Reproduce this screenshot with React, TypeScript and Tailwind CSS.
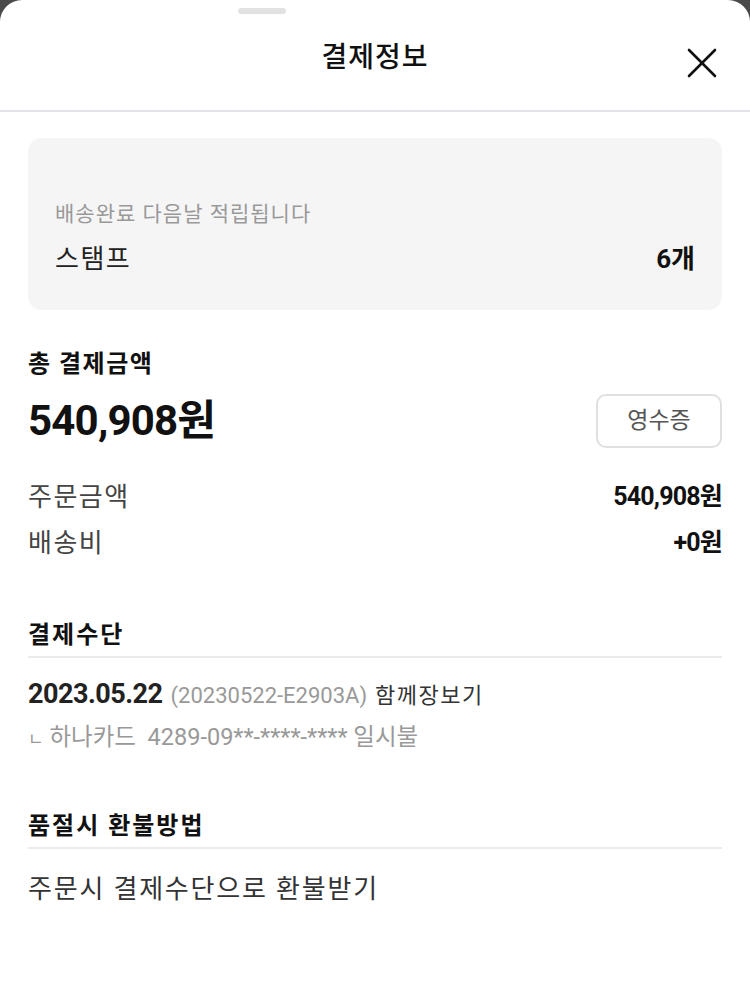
const font = { fontFamily: 'Roboto, "Noto Sans CJK KR", sans-serif' };

const Row = ({ label, value }: { label: string; value: string }) => (
  <div className="flex items-center justify-between">
    <span className="text-[26px] leading-[32px] tracking-[1.5px] text-[#444]">{label}</span>
    <span className="text-[25px] leading-[32px] font-bold tracking-[-0.8px] text-[#111]">{value}</span>
  </div>
);

const SectionTitle = ({ children }: { children: string }) => (
  <div className="border-b-2 border-[#ebebeb] pb-[7px]">
    <h3 className="text-[24px] leading-[28px] font-bold tracking-[2px] text-[#111]">{children}</h3>
  </div>
);

const CloseIcon = () => (
  <svg width="30" height="30" viewBox="0 0 30 30" fill="none" stroke="currentColor" strokeWidth="2.6" strokeLinecap="round">
    <path d="M2 2 L28 28" />
    <path d="M28 2 L2 28" />
  </svg>
);

export default function App() {
  return (
    <div className="min-h-[986px] w-[750px] bg-[#4a4a4a]" style={font}>
      <div className="min-h-[986px] rounded-t-[22px] bg-white">
        <header className="relative flex h-[112px] items-center justify-center border-b-2 border-[#e2e4e8] pb-[2px]">
          <div className="absolute top-[8px] left-[238px] h-[6px] w-[48px] rounded-full bg-[#e2e2e2]" />
          <h1 className="mt-[8px] text-[28px] font-medium tracking-[1px] text-[#111]">결제정보</h1>
          <button className="absolute top-[48px] left-[687px] text-[#111]">
            <CloseIcon />
          </button>
        </header>

        <main className="px-[28px]">
          <section className="mt-[26px] rounded-[14px] bg-[#f5f5f5] px-[27px] pt-[63px] pb-[34px]">
            <p className="text-[21px] leading-[26px] tracking-[1px] text-[#999]">배송완료 다음날 적립됩니다</p>
            <div className="mt-[15px] flex items-center justify-between">
              <span className="text-[26px] leading-[34px] tracking-[1.5px] text-[#222]">스탬프</span>
              <span className="text-[26px] leading-[34px] font-bold text-[#111]">6개</span>
            </div>
          </section>

          <section className="mt-[40px]">
            <h3 className="text-[24px] leading-[28px] font-bold tracking-[1.5px] text-[#111]">총 결제금액</h3>
            <div className="mt-[16px] flex items-center justify-between">
              <span className="text-[42px] leading-[48px] font-bold tracking-[-0.8px] text-[#111]">540,908원</span>
              <button className="h-[54px] w-[126px] rounded-[10px] border-2 border-[#e0e0e0] text-[23px] text-[#555]">
                영수증
              </button>
            </div>
            <div className="mt-[33px] flex flex-col gap-[14px]">
              <Row label="주문금액" value="540,908원" />
              <Row label="배송비" value="+0원" />
            </div>
          </section>

          <section className="mt-[62px]">
            <SectionTitle>결제수단</SectionTitle>
            <div className="mt-[22px] flex items-baseline gap-[8px] leading-[28px]">
              <span className="text-[27px] font-bold tracking-[-0.5px] text-[#222]">2023.05.22</span>
              <span className="text-[22px] text-[#999]">(20230522-E2903A)</span>
              <span className="text-[22px] tracking-[1.5px] text-[#333]">함께장보기</span>
            </div>
            <p className="mt-[13px] text-[23.5px] leading-[28px] text-[#999]">
              <span className="text-[17px]">ㄴ</span> 하나카드 &nbsp;4289-09**-****-**** 일시불
            </p>
          </section>

          <section className="mt-[59px]">
            <SectionTitle>품절시 환불방법</SectionTitle>
            <p className="mt-[24px] text-[26px] leading-[32px] tracking-[1.8px] text-[#333]">주문시 결제수단으로 환불받기</p>
          </section>
        </main>
      </div>
    </div>
  );
}
